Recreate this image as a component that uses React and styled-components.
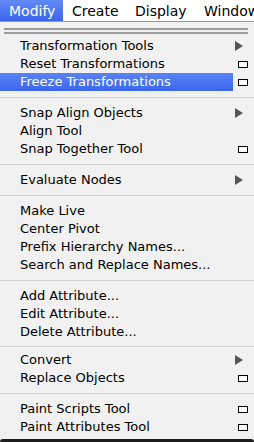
import styled, { createGlobalStyle } from "styled-components";

const GlobalStyle = createGlobalStyle`
  html, body {
    margin: 0;
    padding: 0;
    background: #f1f1f1;
  }
  body {
    font-family: "DejaVu Sans", "Liberation Sans", sans-serif;
    -webkit-font-smoothing: antialiased;
  }
`;

const Frame = styled.div`
  width: 254px;
  height: 442px;
  overflow: hidden;
  display: flex;
  flex-direction: column;
  background: #f1f1f1;
`;

const MenuBar = styled.div`
  display: flex;
  height: 21px;
  background: #ffffff;
  border-bottom: 1px solid #9b9b9b;
  font-size: 14px;
  color: #000;
  white-space: nowrap;
`;

const MenuTitle = styled.div`
  display: flex;
  align-items: center;
  padding: 0 10px 0 9px;
  width: ${(p) => p.$w}px;
  box-sizing: border-box;
  color: ${(p) => (p.$active ? "#fff" : "#000")};
  background: ${(p) =>
    p.$active ? "linear-gradient(#6189f7, #3a65ec)" : "transparent"};
`;

const Panel = styled.div`
  flex: 1;
  display: flex;
  flex-direction: column;
  padding-top: 6px;
  font-size: 13px;
  color: #000;
`;

const TearOff = styled.div`
  height: 2px;
  margin: 0 6px 0 4px;
  border-top: 2px solid #9c9c9c;
  border-bottom: 2px solid #9c9c9c;
  margin-bottom: 3px;
`;

const Separator = styled.div`
  height: 1px;
  margin: ${(p) => (p.$tight ? "5px 0 4px" : "6px 0")};
  background: #d2d2d2;
`;

const Row = styled.div`
  display: flex;
  height: 18px;
`;

const Label = styled.div`
  width: 233px;
  box-sizing: border-box;
  padding-left: 20px;
  display: flex;
  align-items: center;
  padding-bottom: 2px;
  white-space: nowrap;
  color: ${(p) => (p.$hot ? "#fff" : "#000")};
  background: ${(p) =>
    p.$hot ? "linear-gradient(#5a83f6, #3b66ec)" : "transparent"};
`;

const Marker = styled.div`
  flex: 1;
  display: flex;
  align-items: center;
  padding-left: ${(p) => (p.$kind === "arrow" ? 2 : 5)}px;
`;

const OptionBox = styled.div`
  width: 10px;
  height: 7px;
  box-sizing: border-box;
  border: 1px solid #000;
  background: #fff;
`;

const BottomEdge = styled.div`
  height: 3px;
  background: #1c1c1c;
  border-radius: 3px 3px 0 0;
`;

const Arrow = () => (
  <svg width="8" height="10" viewBox="0 0 8 10">
    <path d="M0 0 L8 5 L0 10 Z" fill="#555" />
  </svg>
);

const sections = [
  {
    items: [
      { label: "Transformation Tools", kind: "arrow" },
      { label: "Reset Transformations", kind: "box" },
      { label: "Freeze Transformations", kind: "box", hot: true },
    ],
  },
  {
    items: [
      { label: "Snap Align Objects", kind: "arrow" },
      { label: "Align Tool" },
      { label: "Snap Together Tool", kind: "box" },
    ],
  },
  { items: [{ label: "Evaluate Nodes", kind: "arrow" }] },
  {
    items: [
      { label: "Make Live" },
      { label: "Center Pivot" },
      { label: "Prefix Hierarchy Names..." },
      { label: "Search and Replace Names..." },
    ],
  },
  {
    items: [
      { label: "Add Attribute..." },
      { label: "Edit Attribute..." },
      { label: "Delete Attribute..." },
    ],
  },
  {
    tight: true,
    items: [
      { label: "Convert", kind: "arrow" },
      { label: "Replace Objects", kind: "box" },
    ],
  },
  {
    items: [
      { label: "Paint Scripts Tool", kind: "box" },
      { label: "Paint Attributes Tool", kind: "box" },
    ],
  },
];

const menus = [
  { name: "Modify", w: 63, active: true },
  { name: "Create", w: 63 },
  { name: "Display", w: 69 },
  { name: "Window", w: 70 },
];

export default function App() {
  return (
    <>
      <GlobalStyle />
      <Frame>
        <MenuBar>
          {menus.map((m) => (
            <MenuTitle key={m.name} $w={m.w} $active={m.active}>
              {m.name}
            </MenuTitle>
          ))}
        </MenuBar>
        <Panel>
          <TearOff />
          {sections.map((sec, i) => (
            <div key={i}>
              {i > 0 && <Separator $tight={sec.tight} />}
              {sec.items.map((it) => (
                <Row key={it.label}>
                  <Label $hot={it.hot}>{it.label}</Label>
                  <Marker $kind={it.kind}>
                    {it.kind === "arrow" && <Arrow />}
                    {it.kind === "box" && <OptionBox />}
                  </Marker>
                </Row>
              ))}
            </div>
          ))}
        </Panel>
        <BottomEdge />
      </Frame>
    </>
  );
}
